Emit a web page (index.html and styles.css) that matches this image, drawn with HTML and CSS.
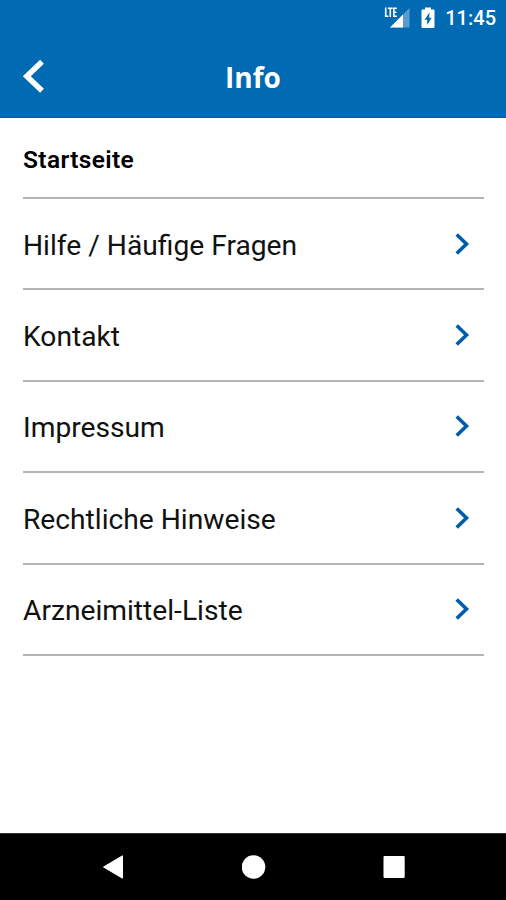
FILE: index.html
```html
<!DOCTYPE html>
<html lang="de">
<head>
<meta charset="utf-8">
<title>Info</title>
<link rel="stylesheet" href="styles.css">
</head>
<body>
<div class="screen">
  <div class="status">
    <svg class="signal" width="27" height="24" viewBox="0 0 27 24">
      <path d="M26.500 2V21.500H7Z" fill="#5b9cce"/>
      <path d="M20 8.500V21.500H7Z" fill="#fff"/>
      <path d="M0.500 0H15V9L11.500 12.500H0.500Z" fill="#006ab2"/>
      <path d="M2.700 1.500V10.300H5.500M4.900 2.200H9.700M7.300 2.200V11M13.900 2.200H10.900V10.300H13.900M10.900 6.300H13.500" fill="none" stroke="#fff" stroke-width="1.600"/>
    </svg>
    <svg class="battery" width="14" height="22" viewBox="0 0 14 22">
      <path d="M4 0.500H10V2.500H12.500Q13.500 2.500 13.500 3.500V20Q13.500 21 12.500 21H1.500Q0.500 21 0.500 20V3.500Q0.500 2.500 1.500 2.500H4Z" fill="#fff"/>
      <path d="M8.500 5.500L3.500 12.700H6.200V18L10.600 10.800H8.200Z" fill="#006ab2"/>
    </svg>
    <span class="clock">11:45</span>
  </div>
  <header class="bar">
    <svg class="back" width="24" height="36" viewBox="0 0 24 36"><path d="M20 2.700L4.800 17.200L20 31.700" fill="none" stroke="#fff" stroke-width="5.500"/></svg>
    <h1 class="title">Info</h1>
  </header>
  <main class="content">
    <h2 class="section">Startseite</h2>
    <ul class="list">
      <li class="row"><span class="label">Hilfe / Häufige Fragen</span><svg class="chevron" width="16" height="24" viewBox="0 0 16 24"><path d="M2.700 2.500L12.500 12L2.700 21.500" /></svg></li>
      <li class="row"><span class="label">Kontakt</span><svg class="chevron" width="16" height="24" viewBox="0 0 16 24"><path d="M2.700 2.500L12.500 12L2.700 21.500" /></svg></li>
      <li class="row"><span class="label">Impressum</span><svg class="chevron" width="16" height="24" viewBox="0 0 16 24"><path d="M2.700 2.500L12.500 12L2.700 21.500" /></svg></li>
      <li class="row"><span class="label">Rechtliche Hinweise</span><svg class="chevron" width="16" height="24" viewBox="0 0 16 24"><path d="M2.700 2.500L12.500 12L2.700 21.500" /></svg></li>
      <li class="row"><span class="label">Arzneimittel-Liste</span><svg class="chevron" width="16" height="24" viewBox="0 0 16 24"><path d="M2.700 2.500L12.500 12L2.700 21.500" /></svg></li>
    </ul>
  </main>
  <nav class="nav">
    <svg width="24" height="26" viewBox="0 0 24 26"><path d="M21.500 1.800V24.200L2.500 13Z" fill="#fff" stroke="#fff" stroke-width="1" stroke-linejoin="round"/></svg>
    <svg width="24" height="26" viewBox="0 0 24 26"><circle cx="11.500" cy="13" r="11.800" fill="#fff"/></svg>
    <svg width="24" height="26" viewBox="0 0 24 26"><rect x="1.500" y="2" width="21.200" height="22" rx="1" fill="#fff"/></svg>
  </nav>
</div>
</body>
</html>
```
FILE: styles.css
```css
* { box-sizing: border-box; }
body { margin: 0; background: #fff; }
.screen {
  width: 506px;
  height: 900px;
  display: flex;
  flex-direction: column;
  font-family: Roboto, "Liberation Sans", sans-serif;
  color: #111;
}
.status {
  height: 36px;
  display: flex;
  align-items: center;
  justify-content: flex-end;
  padding-right: 10px;
  background: #006ab2;
  color: #fff;
}
.signal { margin-right: 11px; }
.battery { margin-right: 10px; }
.clock { font-size: 20px; font-weight: 500; line-height: 24px; }
.bar {
  height: 82px;
  display: grid;
  grid-template-columns: 60px 1fr 60px;
  align-items: center;
  background: #006ab2;
  border-bottom: 1px solid #005dab;
  color: #fff;
}
.back { margin-left: 22px; }
.title {
  margin: 0;
  padding-top: 1px;
  text-align: center;
  font: 700 28px/36px "Open Sans", sans-serif;
}
.content { flex: 1; padding: 0 22px 0 23px; }
.section {
  margin: 0;
  height: 81px;
  padding-top: 27px;
  border-bottom: 2px solid #b4b4b4;
  color: #000;
  font-size: 24.5px;
  font-weight: 600;
  letter-spacing: 0.35px;
  line-height: 30px;
}
.list { list-style: none; margin: 0; padding: 0; }
.row {
  height: 91.4px;
  display: flex;
  align-items: center;
  justify-content: space-between;
  padding-right: 14px;
  border-bottom: 2px solid #b4b4b4;
  font-size: 28.2px;
  line-height: 36px;
}
.label { padding-top: 4px; }
.chevron { fill: none; stroke: #005dab; stroke-width: 3.6; }
.nav {
  height: 67px;
  display: flex;
  justify-content: space-between;
  align-items: center;
  padding: 0 100px 0 101px;
  background: #000;
  border-top: 1px solid #333;
}
```
